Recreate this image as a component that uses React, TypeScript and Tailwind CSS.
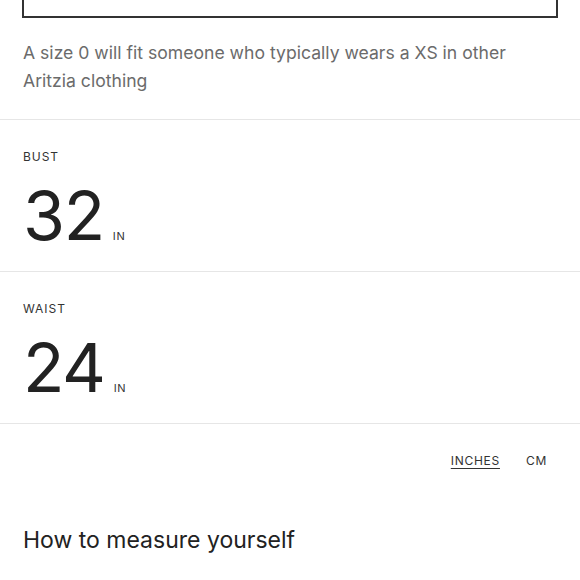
import React from 'react';

const font = { fontFamily: 'Inter, "Liberation Sans", sans-serif' };

function Measure({ label, value }: { label: string; value: string }) {
    return (
        <div className="border-t border-[#e6e6e6] px-[23px] pt-[29px] pb-[22px]">
            <p className="text-[12px] leading-4 tracking-[0.08em] text-[#333]">{label}</p>
            <div className="mt-[16px] flex items-baseline gap-[9px]">
                <span className="text-[68px] leading-[68px] tracking-[-0.02em] text-[#222]">{value}</span>
                <span className="text-[11px] tracking-[0.06em] text-[#333]">IN</span>
            </div>
        </div>
    );
}

export default function App() {
    return (
        <div className="w-[580px] h-[580px] overflow-hidden bg-white" style={font}>
            {/* selected size box, cut off at top */}
            <div className="mx-[22px] -mt-[42px] h-[60px] border-2 border-[#333]"></div>

            <p className="mt-[21px] mb-[24px] px-[23px] text-[17.6px] leading-[28px] text-[#6b6b6b]">
                A size 0 will fit someone who typically wears a XS in other Aritzia clothing
            </p>

            <Measure label="BUST" value="32" />
            <Measure label="WAIST" value="24" />

            <div className="border-t border-[#e6e6e6] flex justify-end gap-[26px] pr-[33px] pt-[29px]">
                <span className="text-[12px] leading-4 tracking-[0.06em] text-[#333] underline underline-offset-[3px]">INCHES</span>
                <span className="text-[12px] leading-4 tracking-[0.06em] text-[#333]">CM</span>
            </div>

            <h2 className="mt-[55px] px-[23px] text-[23px] leading-8 text-[#222]">How to measure yourself</h2>
        </div>
    );
}
